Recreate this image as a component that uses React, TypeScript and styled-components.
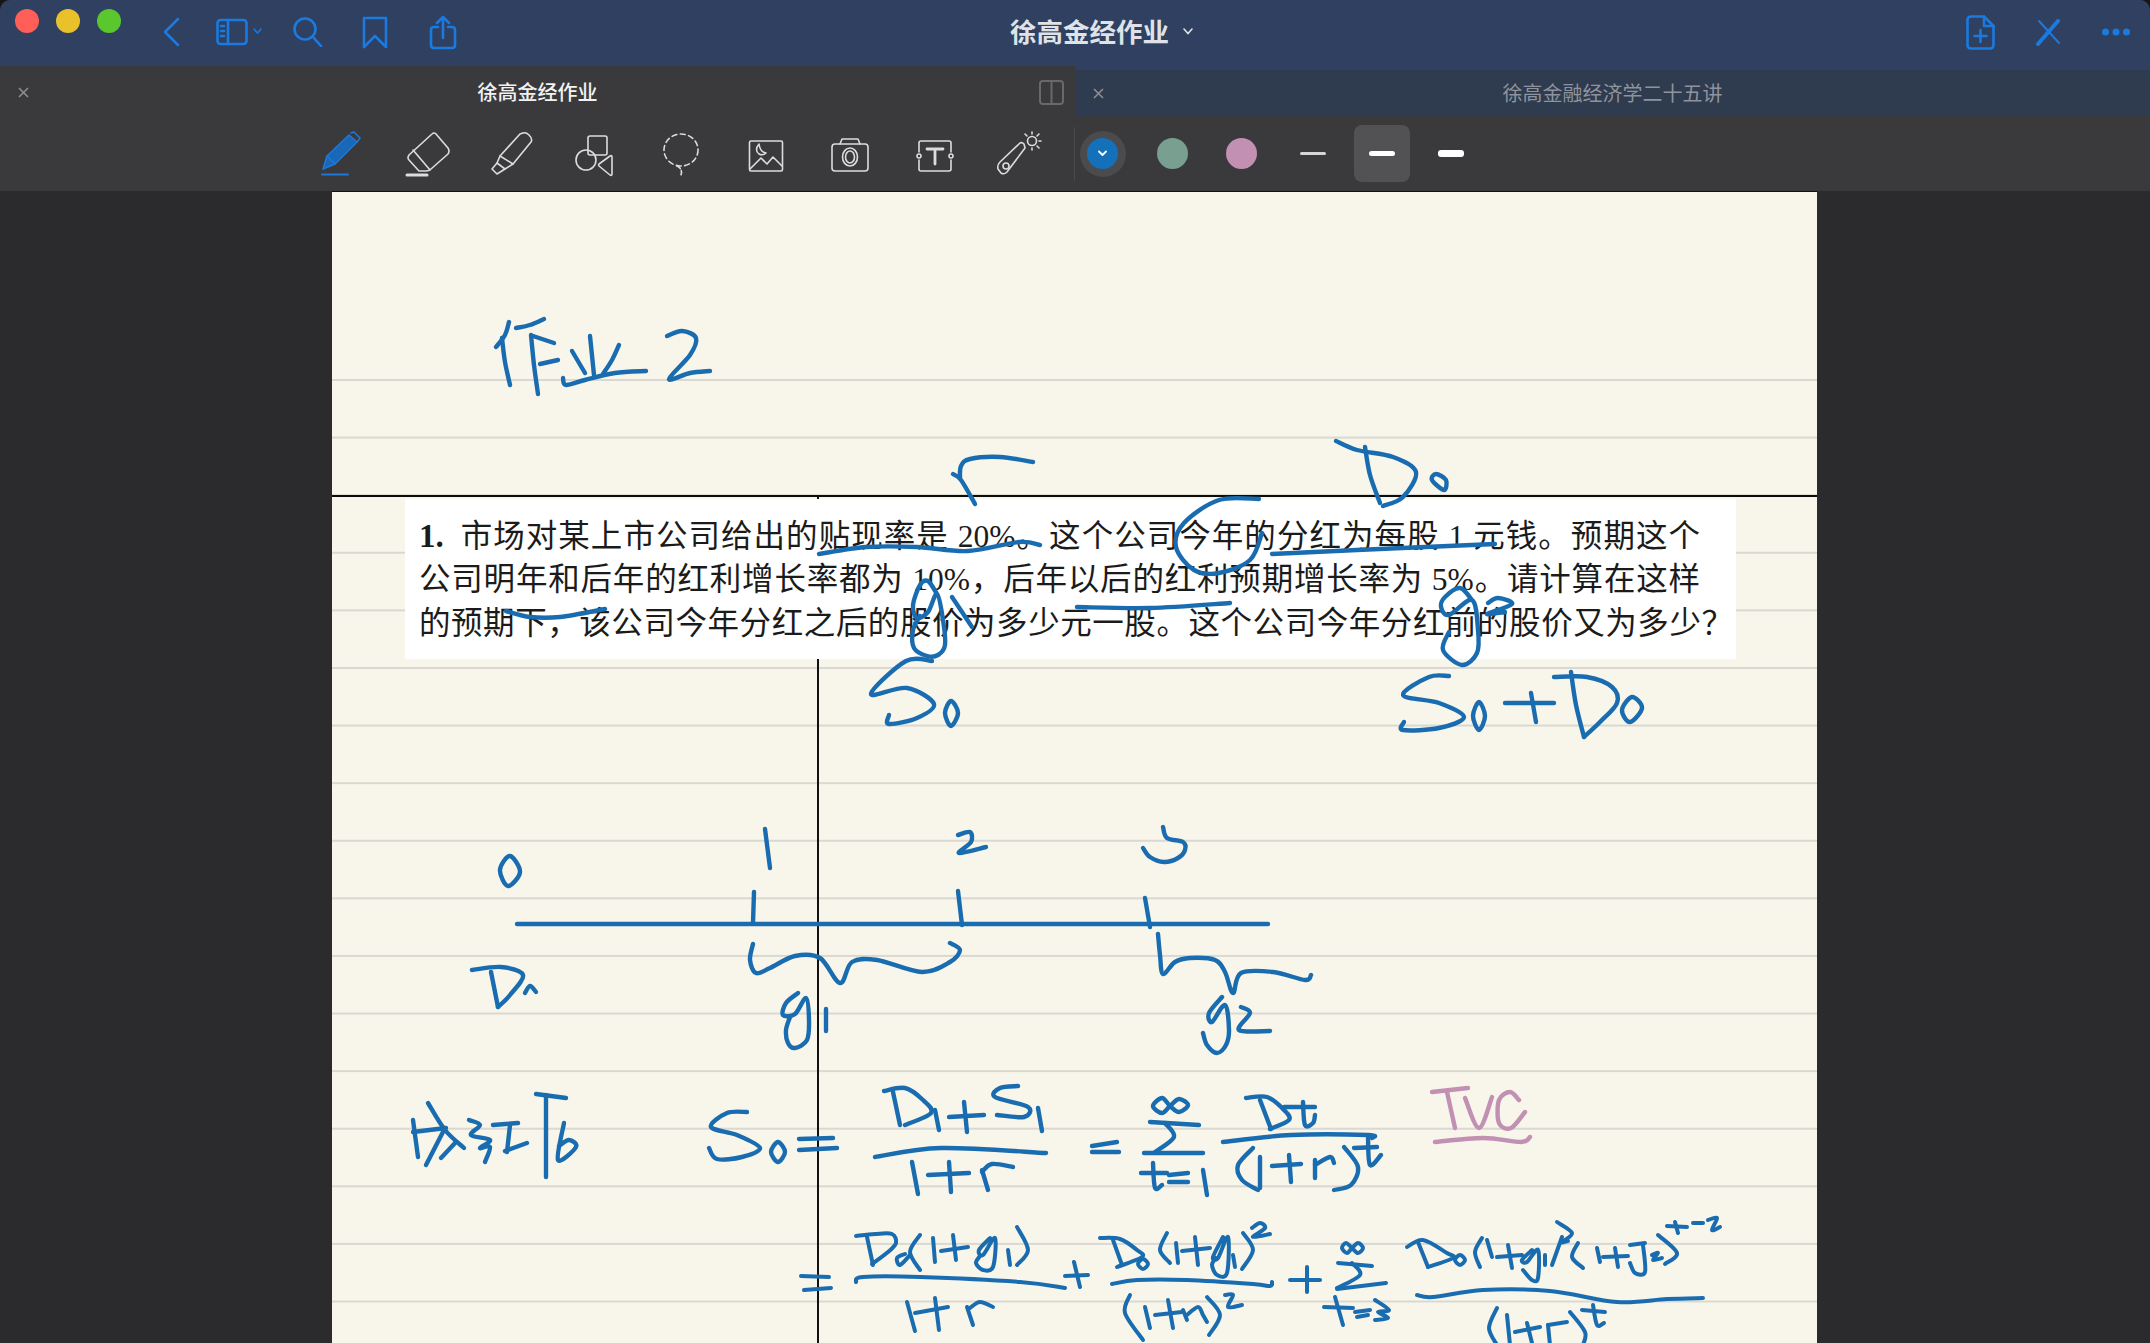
import { createGlobalStyle, styled } from 'styled-components';

const GlobalStyle = createGlobalStyle`
  html, body {
    margin: 0;
    padding: 0;
    background: #161618;
  }
  body {
    font-family: 'Noto Sans CJK SC', 'Noto Sans', sans-serif;
  }
`;

const Window = styled.div`
  width: 2150px;
  height: 1343px;
  display: flex;
  flex-direction: column;
  overflow: hidden;
  border-radius: 10px 10px 0 0;
  background: #2b2b2d;
`;

const TitleBar = styled.div`
  height: 66px;
  flex: none;
  display: grid;
  grid-template-columns: 1010px auto 1fr;
  align-items: center;
  background: #2f4060;
`;

const BarGroup = styled.div<{ $end?: boolean }>`
  display: flex;
  align-items: center;
  justify-content: ${(p) => (p.$end ? 'flex-end' : 'flex-start')};
  padding-left: ${(p) => (p.$end ? 0 : 15)}px;
  height: 100%;
  padding-bottom: 2px;
  box-sizing: border-box;
`;

const Lights = styled.div`
  display: flex;
  gap: 17px;
  margin-right: 16px;
  margin-top: -22px;
`;

const Light = styled.span<{ $color: string }>`
  width: 24px;
  height: 24px;
  border-radius: 50%;
  background: ${(p) => p.$color};
`;

const BarButton = styled.a`
  width: 68px;
  display: flex;
  justify-content: center;
  align-items: center;
  svg {
    fill: none;
    stroke: #1b7ae0;
    stroke-width: 2.6;
    stroke-linecap: round;
    stroke-linejoin: round;
    display: block;
  }
`;

const DocTitle = styled.div`
  display: flex;
  align-items: center;
  gap: 14px;
  font-size: 26.5px;
  font-weight: 700;
  line-height: 34px;
  color: #dfe2e7;
  padding-bottom: 4px;
  svg {
    fill: none;
    stroke: #dfe2e7;
    stroke-width: 1.6;
    stroke-linecap: round;
  }
`;

const TabRow = styled.div`
  height: 50px;
  flex: none;
  display: grid;
  grid-template-columns: 1075px 1075px;
`;

const Tab = styled.div<{ $active?: boolean }>`
  display: grid;
  grid-template-columns: 1fr auto 1fr;
  align-items: center;
  box-sizing: border-box;
  background: ${(p) => (p.$active ? '#3a3a3c' : '#2f3b4f')};
  border-top: ${(p) => (p.$active ? '2px solid #3a3a3c' : '4px solid #2f4060')};
  font-size: 20px;
  line-height: 28px;
  font-weight: ${(p) => (p.$active ? 500 : 400)};
  color: ${(p) => (p.$active ? '#f2f2f2' : '#8e939d')};
`;

const TabClose = styled.svg`
  margin-left: 18px;
  stroke: #8f9094;
  stroke-width: 1.5;
  fill: none;
`;

const TabSplit = styled.svg`
  justify-self: end;
  margin-right: 11px;
  fill: none;
  stroke: #69696c;
  stroke-width: 2;
`;

const Toolbar = styled.div`
  height: 75px;
  flex: none;
  display: flex;
  align-items: center;
  padding-left: 301px;
  background: #3a3a3c;
`;

const ToolCell = styled.a`
  width: 84.5px;
  height: 46px;
  display: flex;
  justify-content: center;
  svg {
    width: 50px;
    height: 46px;
    fill: none;
    stroke: #dcdcdc;
    stroke-width: 1.6;
    stroke-linecap: round;
    stroke-linejoin: round;
  }
`;

const ToolDivider = styled.span`
  width: 1px;
  height: 54px;
  margin: 0 5px 0 12px;
  background: #4a4a4c;
`;

const Swatches = styled.div`
  display: flex;
  gap: 23.5px;
  margin-right: 20px;
`;

const SwatchRing = styled.span<{ $selected?: boolean }>`
  width: 46px;
  height: 46px;
  border-radius: 50%;
  display: flex;
  align-items: center;
  justify-content: center;
  background: ${(p) => (p.$selected ? '#4b4b4e' : 'transparent')};
`;

const Swatch = styled.span<{ $color: string }>`
  width: 31px;
  height: 31px;
  border-radius: 50%;
  display: flex;
  align-items: center;
  justify-content: center;
  background: ${(p) => p.$color};
  svg {
    fill: none;
    stroke: #fff;
    stroke-width: 1.8;
    stroke-linecap: round;
    stroke-linejoin: round;
  }
`;

const Widths = styled.div`
  display: flex;
  gap: 13px;
`;

const WidthCell = styled.span<{ $selected?: boolean }>`
  width: 56px;
  height: 57px;
  border-radius: 8px;
  display: flex;
  align-items: center;
  justify-content: center;
  background: ${(p) => (p.$selected ? '#525154' : 'transparent')};
`;

const WidthBar = styled.span<{ $height: number }>`
  width: 26px;
  height: ${(p) => p.$height}px;
  border-radius: 3px;
  background: ${(p) => (p.$height < 4 ? '#d6d6d6' : '#fff')};
`;

const Stage = styled.div`
  flex: 1;
  min-height: 0;
  display: flex;
  padding-left: 332px;
  background: #2b2b2d;
`;

const Paper = styled.div`
  position: relative;
  width: 1485px;
  overflow: hidden;
  background:
    linear-gradient(#f8f6ea, #f8f6ea) 0 0 / 100% 187px no-repeat,
    linear-gradient(to bottom, #d9d8d2 2px, transparent 2px) 0 188px / 100% 57.6px repeat-y,
    #f8f6ea;
  box-shadow: inset 0 1px 0 #111;
`;

const Divider = styled.div`
  height: 2px;
  margin-top: 304px;
  background: #0c0c0c;
`;

const MarginRule = styled.div`
  position: absolute;
  left: 485px;
  top: 304px;
  bottom: 0;
  width: 2px;
  background: #111;
`;

const Excerpt = styled.div`
  position: relative;
  width: 1331px;
  height: 160px;
  margin: 2px 0 0 73px;
  padding: 15px 0 0 14px;
  box-sizing: border-box;
  background: #fff;
  font-family: 'Liberation Serif', 'Noto Sans CJK SC', serif;
  font-size: 31.5px;
  line-height: 44px;
  color: #1b1b1b;
`;

const ExcerptLine = styled.div<{ $width: number }>`
  width: ${(p) => p.$width}px;
  height: 44px;
  white-space: nowrap;
  text-align: justify;
  text-align-last: justify;
  b {
    font-weight: 700;
    font-size: 33px;
    margin-right: 8px;
  }
`;

const Ink = styled.svg`
  position: absolute;
  inset: 0;
  width: 100%;
  height: 100%;
  fill: none;
  stroke-linecap: round;
  stroke-linejoin: round;
`;

// "x,y x,y ..." -> smooth path through the points, closed when it ends where it starts
const curve = (pts: string) => {
  const p = pts.split(' ').map((s) => s.split(',').map(Number));
  const n = p.length;
  const closed = n > 3 && p[0][0] === p[n - 1][0] && p[0][1] === p[n - 1][1];
  let d = `M${p[0][0]} ${p[0][1]}`;
  for (let i = 0; i < n - 1; i++) {
    const a = closed && i === 0 ? p[n - 2] : p[Math.max(i - 1, 0)];
    const b = p[i];
    const c = p[i + 1];
    const e = closed && i === n - 2 ? p[1] : p[Math.min(i + 2, n - 1)];
    const c1x = b[0] + (c[0] - a[0]) / 6;
    const c1y = b[1] + (c[1] - a[1]) / 6;
    const c2x = c[0] - (e[0] - b[0]) / 6;
    const c2y = c[1] - (e[1] - b[1]) / 6;
    d += ` C${c1x} ${c1y} ${c2x} ${c2y} ${c[0]} ${c[1]}`;
  }
  return d;
};

const blueInk = [
  // heading
  '509,322 505,335 496,347', '502,338 505,362 510,385', '516,328 530,325 544,319',
  '531,335 534,365 538,394', '533,336 554,343', '540,364 558,360',
  '572,351 585,373', '590,336 594,375', '619,345 612,360 603,374',
  '563,378 566,385 585,380 615,373 646,371',
  '667,336 682,331 696,338 690,355 669,379 690,373 710,371',
  // r and D0 over the excerpt
  '953,474 961,480 975,504', '960,478 961,466 970,459 1000,457 1033,462',
  '1336,441 1357,450 1393,457 1416,472 1403,497 1383,506',
  '1365,447 1370,475 1380,503', '1436,474 1432,480 1444,490 1446,480 1436,474',
  // underlines and ring
  '819,554 866,547 917,547 968,551 1019,542 1040,545',
  '506,611 530,617 560,617 605,609',
  '1259,499 1219,500 1184,523 1176,547 1194,570 1219,573 1250,560 1262,533',
  '1272,554 1357,550 1495,544', '1077,607 1150,608 1230,603',
  // g1, S0
  '937,594 928,581 920,585 913,605 917,618 928,612 937,594 943,620 945,645 938,655 927,656 914,648 913,630 920,616',
  '952,597 972,627',
  '932,661 906,661 871,694 907,688 934,704 917,718 889,724 889,715',
  '951,701 945,713 951,726 958,713 951,701',
  // g2, S0+D0
  '1472,600 1460,588 1445,597 1441,607 1449,615 1472,600 1478,630 1477,653 1462,665 1443,650 1449,632',
  '1488,603 1498,598 1512,604 1487,614 1505,612',
  '1449,676 1429,677 1403,695 1439,703 1464,717 1439,728 1403,730 1404,722',
  '1479,702 1473,716 1479,730 1485,716 1479,702',
  '1505,703 1554,703', '1531,693 1536,722',
  '1554,677 1587,677 1612,687 1617,703 1600,722 1584,737', '1571,672 1576,705 1584,737',
  '1632,697 1622,710 1630,722 1642,708 1632,697',
  // time line
  '510,856 500,870 508,886 520,872 510,856',
  '765,829 770,868', '958,835 970,832 971,842 959,853 986,847',
  '1163,827 1167,838 1183,842 1185,850 1178,858 1164,862 1150,857 1143,848',
  '517,924 1268,924', '754,892 753,923', '958,891 962,925', '1145,898 1150,927',
  '472,970 501,967 523,975 510,995 498,1007', '491,972 498,1007', '525,993 530,986 536,992',
  '753,944 750,960 756,973 770,968 795,956 820,958 840,983 852,962 877,960 922,972 950,962 960,950 950,943',
  '798,993 786,1003 783,1015 795,1014 806,998 809,1020 807,1040 795,1048 788,1043 786,1030 790,1017',
  '826,1009 826,1031',
  '1158,934 1160,955 1163,974 1175,962 1190,958 1215,960 1225,972 1233,993 1241,973 1273,972 1305,980 1311,975',
  '1222,997 1209,1013 1212,1022 1225,1005 1229,1030 1226,1045 1217,1053 1207,1045 1203,1033',
  '1241,1007 1250,1013 1239,1030 1270,1031',
  // 分红后
  '413,1120 418,1157', '413,1132 446,1128', '428,1103 445,1130 464,1148', '445,1128 426,1165', '456,1142 441,1158',
  '469,1120 480,1125 471,1135 490,1140 480,1148 490,1147 485,1162',
  '493,1125 518,1123', '510,1125 507,1152', '505,1151 527,1143',
  '536,1094 566,1098', '546,1095 546,1177', '564,1123 558,1160 576,1147 569,1140 559,1146',
  // S0 = (D1+S1)/(1+r)
  '747,1112 727,1113 711,1127 737,1135 760,1148 742,1157 717,1159 709,1148',
  '778,1142 771,1152 778,1162 785,1152 778,1142',
  '799,1139 833,1138', '799,1150 837,1148',
  '884,1091 905,1088 923,1100 931,1113 905,1125', '893,1092 900,1125', '935,1110 939,1130',
  '949,1117 984,1115', '964,1102 967,1132',
  '1018,1086 1000,1088 995,1097 1028,1107 1024,1117 997,1115', '1038,1108 1042,1131',
  '875,1157 941,1148 1046,1153',
  '912,1162 918,1194', '928,1175 969,1173', '949,1162 951,1192',
  '982,1170 988,1190', '982,1172 992,1164 1013,1167',
  '1092,1146 1117,1142', '1092,1152 1119,1152',
  // sum over Dt
  '1170,1106 1162,1098 1153,1106 1162,1113 1170,1106 1179,1099 1188,1105 1179,1112 1170,1106',
  '1150,1122 1199,1125', '1165,1123 1174,1137 1155,1152', '1144,1153 1203,1153',
  '1141,1173 1167,1173', '1153,1163 1155,1188 1162,1185',
  '1169,1175 1188,1173', '1169,1182 1188,1182', '1203,1170 1207,1195',
  '1246,1098 1267,1097 1284,1110 1289,1120 1270,1129', '1260,1100 1271,1129',
  '1284,1107 1315,1107', '1303,1102 1305,1125 1313,1123 1315,1115',
  '1223,1142 1291,1135 1368,1135 1372,1138',
  '1253,1148 1238,1165 1242,1180 1258,1190', '1260,1157 1260,1188',
  '1272,1166 1301,1164', '1289,1155 1291,1182',
  '1315,1160 1315,1178', '1315,1165 1330,1157 1334,1163',
  '1344,1147 1358,1167 1351,1185 1334,1190',
  '1354,1148 1377,1147', '1368,1138 1370,1165 1381,1155',
];

const fineInk = [
  // first term
  '801,1276 829,1277', '804,1290 831,1288',
  '856,1236 875,1234 892,1234 896,1243 888,1252 872,1264', '867,1237 873,1265',
  '905,1254 897,1258 900,1265 910,1255',
  '920,1235 910,1252 920,1270', '933,1238 935,1262',
  '941,1251 968,1247', '953,1235 956,1260',
  '990,1238 979,1250 983,1255 995,1238 993,1267 983,1270 976,1263 980,1256',
  '1008,1250 1010,1265', '1017,1227 1028,1250 1017,1265',
  '856,1282 863,1277 920,1277 1020,1282 1065,1288',
  '1065,1276 1088,1275', '1074,1262 1080,1287',
  '907,1302 915,1331', '915,1313 948,1307', '935,1298 939,1330',
  '967,1307 973,1325', '970,1308 980,1302 993,1307',
  // second term
  '1100,1238 1120,1239 1137,1250 1142,1257 1117,1267', '1113,1240 1122,1265',
  '1143,1259 1138,1264 1143,1269 1148,1264 1143,1259',
  '1167,1233 1160,1250 1170,1263', '1176,1243 1178,1263',
  '1182,1251 1210,1248', '1195,1237 1198,1265',
  '1223,1237 1213,1257 1218,1258 1228,1237 1227,1273 1217,1275 1212,1265 1216,1258',
  '1233,1255 1235,1267', '1243,1233 1253,1250 1242,1269',
  '1252,1228 1260,1223 1265,1228 1253,1237 1270,1234',
  '1112,1284 1137,1280 1187,1280 1253,1284 1270,1286 1272,1282',
  '1130,1295 1125,1313 1143,1340', '1145,1307 1150,1328',
  '1155,1315 1182,1312', '1168,1300 1173,1328',
  '1183,1310 1187,1320', '1187,1315 1198,1307 1203,1315 1207,1322',
  '1207,1297 1220,1315 1209,1335', '1225,1295 1233,1295 1228,1307 1242,1305',
  // third term
  '1290,1280 1320,1280', '1307,1267 1307,1292',
  '1352,1248 1346,1243 1342,1248 1347,1253 1352,1248 1358,1243 1363,1248 1358,1253 1352,1248',
  '1338,1263 1372,1266', '1352,1263 1360,1275 1337,1288', '1337,1289 1386,1283',
  '1324,1307 1353,1308', '1335,1297 1343,1325',
  '1355,1312 1370,1310', '1357,1317 1368,1315',
  '1375,1300 1389,1310 1378,1312 1388,1318 1375,1320',
  '1407,1247 1423,1240 1447,1253 1453,1258 1428,1267', '1418,1242 1428,1267',
  '1460,1255 1455,1260 1460,1265 1465,1260 1460,1255',
  '1482,1238 1475,1252 1480,1267', '1487,1240 1492,1257',
  '1497,1257 1522,1255', '1508,1245 1512,1268',
  '1532,1250 1522,1260 1527,1262 1538,1250 1538,1278 1532,1280 1523,1270',
  '1545,1255 1545,1265', '1562,1237 1552,1265',
  '1557,1222 1572,1233 1562,1242 1568,1241',
  '1578,1243 1572,1257 1583,1268', '1597,1248 1600,1262',
  '1603,1257 1628,1256', '1615,1248 1618,1267',
  '1630,1245 1645,1243', '1643,1245 1645,1272 1635,1273 1630,1263',
  '1652,1255 1658,1253 1653,1260 1662,1258', '1658,1235 1677,1253 1665,1264',
  '1667,1226 1687,1227', '1675,1222 1678,1233', '1693,1223 1703,1223',
  '1708,1220 1717,1218 1712,1230 1720,1227',
  '1417,1295 1433,1297 1483,1290 1550,1291 1617,1302 1667,1299 1703,1298',
  '1497,1308 1489,1328 1497,1345', '1507,1315 1510,1345',
  '1515,1332 1540,1327', '1527,1323 1532,1343',
  '1548,1325 1550,1345', '1548,1325 1567,1322',
  '1570,1312 1585,1332 1583,1345',
  '1582,1310 1605,1312', '1593,1305 1597,1325 1604,1323',
];

const pinkInk = [
  '1432,1092 1468,1088', '1447,1092 1455,1128',
  '1465,1098 1479,1128 1492,1097',
  '1519,1100 1510,1092 1499,1100 1499,1123 1511,1128 1525,1112',
  '1435,1142 1483,1138 1521,1142 1530,1137',
];

const tools = [
  <svg viewBox="0 0 50 46" key="pen" style={{ stroke: '#1b78d8' }}>
    <path d="M5 38 L9 25 L31 4 L39 11 L17 33 Z" fill="#1a67b8" />
    <path d="M33 2 L36 1 L42 7 L39 11" />
    <path d="M9 25 L17 33" />
    <path d="M4 43.5 H30" strokeWidth="2" />
  </svg>,
  <svg viewBox="0 0 50 46" key="eraser">
    <path d="M29 3 Q31 1 33 3 L45 17 Q47 20 45 23 L28 38 Q26 40 23 40 L16 40 L6 29 Q4 27 6 24 Z" />
    <path d="M10 19 L27 39" />
    <path d="M4 44 H24" strokeWidth="3" />
  </svg>,
  <svg viewBox="0 0 50 46" key="marker">
    <path d="M36 2 Q39 1 42 4 Q46 8 44 11 L26 33 L13 25 L33 3 Z" />
    <path d="M13 25 L10 32 L18 38 L26 33" />
    <path d="M10 32 L5 38 L10 43 L18 38" />
  </svg>,
  <svg viewBox="0 0 50 46" key="shapes">
    <rect x="16" y="5" width="19" height="19" rx="2" />
    <circle cx="14" cy="29" r="10" />
    <path d="M40 26 V43 Q40 45 38 44 L27 35 Q26 34 27 33 L38 25 Q40 24 40 26 Z" />
  </svg>,
  <svg viewBox="0 0 50 46" key="lasso">
    <ellipse cx="25" cy="19" rx="17" ry="16" strokeDasharray="5 3.5" />
    <path d="M21 35 Q27 38 25 44" strokeDasharray="4 2.5" />
  </svg>,
  <svg viewBox="0 0 50 46" key="image">
    <rect x="8.5" y="10" width="33" height="30" rx="1.5" />
    <path d="M9 38 L20 27 L26 33 L32 26 L41 35" />
    <path d="M18 13 Q13 19 18 23 Q22 25 25 22 Q19 21 18 13 Z" />
  </svg>,
  <svg viewBox="0 0 50 46" key="camera">
    <rect x="7" y="13" width="36" height="27" rx="3" />
    <path d="M15 13 L17 8 H33 L35 13" />
    <ellipse cx="25" cy="26" rx="7.5" ry="9" />
    <ellipse cx="25" cy="26" rx="4.5" ry="6" />
  </svg>,
  <svg viewBox="0 0 50 46" key="text">
    <path d="M9 21 V12 Q9 10 11 10 H39 Q41 10 41 12 V21" />
    <path d="M9 29 V38 Q9 40 11 40 H39 Q41 40 41 38 V29" />
    <circle cx="9" cy="25" r="2" />
    <circle cx="41" cy="25" r="2" />
    <path d="M17 18 H33 M25 18 V33" strokeWidth="2.8" />
  </svg>,
  <svg viewBox="0 0 50 46" key="laser">
    <path d="M6 31 L26 12 Q28 11 30 13 L31 17 L13 41 Q10 44 7 42 L4 38 Q3 34 6 31 Z" />
    <circle cx="12" cy="35" r="3" />
    <circle cx="38" cy="10" r="4.5" />
    <path d="M38 1 V3 M47 10 H45 M31 3 L33 5 M45 3 L43 5 M45 17 L43 15 M38 17 V19" />
  </svg>,
];

export default function App() {
  return (
    <Window lang="zh-CN">
      <GlobalStyle />
      <TitleBar>
        <BarGroup>
          <Lights>
            <Light $color="#ff5f57" />
            <Light $color="#e9c22b" />
            <Light $color="#5ac72e" />
          </Lights>
          <BarButton>
            <svg width="20" height="30" viewBox="0 0 20 30"><path d="M17 2 L4 15 L17 28" /></svg>
          </BarButton>
          <BarButton>
            <svg width="47" height="28" viewBox="0 0 47 28">
              <rect x="1.5" y="2" width="29" height="24" rx="3" />
              <path d="M12 2 V26 M5 8 H8 M5 13 H8 M5 18 H8" />
              <path d="M38 11 L41.5 15 L45 11" strokeWidth="1.5" />
            </svg>
          </BarButton>
          <BarButton>
            <svg width="32" height="30" viewBox="0 0 32 30">
              <circle cx="14" cy="12" r="10.5" />
              <path d="M22 20 L30 29" />
            </svg>
          </BarButton>
          <BarButton>
            <svg width="26" height="33" viewBox="0 0 26 33"><path d="M2 2 H24 V31 L13 20 L2 31 Z" /></svg>
          </BarButton>
          <BarButton>
            <svg width="28" height="35" viewBox="0 0 28 35">
              <path d="M9 12 H5 Q2 12 2 15 V30 Q2 33 5 33 H23 Q26 33 26 30 V15 Q26 12 23 12 H19" />
              <path d="M14 23 V2 M8 8 L14 2 L20 8" />
            </svg>
          </BarButton>
        </BarGroup>
        <DocTitle>
          徐高金经作业
          <svg width="10" height="7" viewBox="0 0 10 7"><path d="M1 1 L5 5.5 L9 1" /></svg>
        </DocTitle>
        <BarGroup $end>
          <BarButton>
            <svg width="29" height="35" viewBox="0 0 29 35">
              <path d="M5 1.5 H18 L27.5 11 V30 Q27.5 33.5 24 33.5 H5 Q1.5 33.5 1.5 30 V5 Q1.5 1.5 5 1.5 Z" />
              <path d="M18 1.5 V11 H27.5" />
              <path d="M14.5 15 V27 M8.5 21 H20.5" />
            </svg>
          </BarButton>
          <BarButton>
            <svg width="26" height="27" viewBox="0 0 26 27">
              <path d="M23 2 L3 25" strokeWidth="4" />
              <path d="M4 2 L24 24" strokeWidth="2" />
            </svg>
          </BarButton>
          <BarButton>
            <svg width="28" height="8" viewBox="0 0 28 8" style={{ fill: '#1b7ae0', stroke: 'none' }}>
              <circle cx="3.5" cy="4" r="3.5" />
              <circle cx="14" cy="4" r="3.5" />
              <circle cx="24.5" cy="4" r="3.5" />
            </svg>
          </BarButton>
        </BarGroup>
      </TitleBar>
      <TabRow>
        <Tab $active>
          <TabClose width="11" height="11" viewBox="0 0 11 11"><path d="M1 1 L10 10 M10 1 L1 10" /></TabClose>
          <span>徐高金经作业</span>
          <TabSplit width="25" height="25" viewBox="0 0 25 25">
            <rect x="1" y="1" width="23" height="23" rx="3" />
            <path d="M12.5 1 V24" />
          </TabSplit>
        </Tab>
        <Tab>
          <TabClose width="11" height="11" viewBox="0 0 11 11"><path d="M1 1 L10 10 M10 1 L1 10" /></TabClose>
          <span>徐高金融经济学二十五讲</span>
        </Tab>
      </TabRow>
      <Toolbar>
        {tools.map((icon) => (
          <ToolCell key={icon.key}>{icon}</ToolCell>
        ))}
        <ToolDivider />
        <Swatches>
          <SwatchRing $selected>
            <Swatch $color="#1470b8">
              <svg width="9" height="7" viewBox="0 0 9 7"><path d="M1 1.5 L4.5 5 L8 1.5" /></svg>
            </Swatch>
          </SwatchRing>
          <SwatchRing><Swatch $color="#789f8f" /></SwatchRing>
          <SwatchRing><Swatch $color="#c190b2" /></SwatchRing>
        </Swatches>
        <Widths>
          <WidthCell><WidthBar $height={3} /></WidthCell>
          <WidthCell $selected><WidthBar $height={5} /></WidthCell>
          <WidthCell><WidthBar $height={7} /></WidthCell>
        </Widths>
      </Toolbar>
      <Stage>
        <Paper>
          <MarginRule />
          <Divider />
          <Excerpt>
            <ExcerptLine $width={1281}><b>1.</b> 市场对某上市公司给出的贴现率是 20%。这个公司今年的分红为每股 1 元钱。预期这个</ExcerptLine>
            <ExcerptLine $width={1281}>公司明年和后年的红利增长率都为 10%，后年以后的红利预期增长率为 5%。请计算在这样</ExcerptLine>
            <ExcerptLine $width={1314}>的预期下，该公司今年分红之后的股价为多少元一股。这个公司今年分红前的股价又为多少？</ExcerptLine>
          </Excerpt>
          <Ink viewBox="332 191 1485 1152">
            <g stroke="#1a6cb0" strokeWidth="4.4">
              {blueInk.map((pts) => (
                <path key={pts} d={curve(pts)} />
              ))}
            </g>
            <g stroke="#1a6cb0" strokeWidth="4">
              {fineInk.map((pts) => (
                <path key={pts} d={curve(pts)} />
              ))}
            </g>
            <g stroke="#c190b2" strokeWidth="4.4">
              {pinkInk.map((pts) => (
                <path key={pts} d={curve(pts)} />
              ))}
            </g>
          </Ink>
        </Paper>
      </Stage>
    </Window>
  );
}
